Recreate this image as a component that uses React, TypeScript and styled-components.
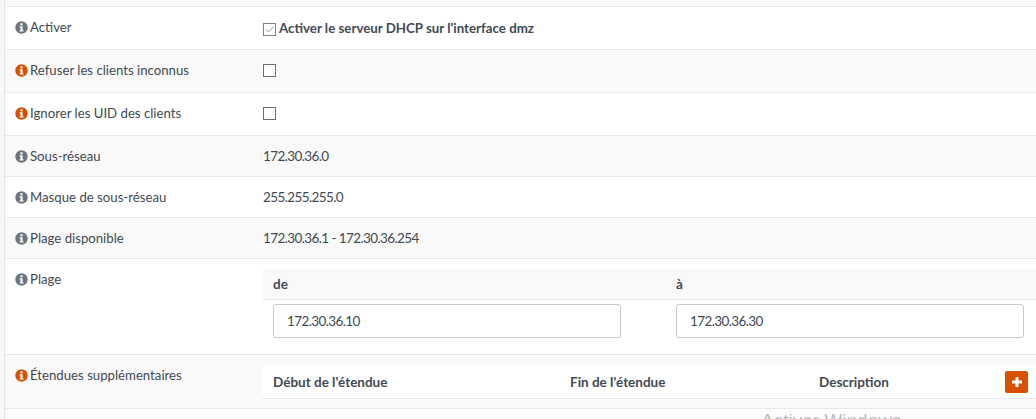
import React from "react";
import styled, { createGlobalStyle } from "styled-components";

const Global = createGlobalStyle`
  html, body { margin: 0; padding: 0; background: #f7f7f7; }
  body { font-family: "Lato", "Noto Sans", sans-serif; font-size: 14px; color: #424a52; }
  #root { width: 1036px; height: 419px; overflow: hidden; }
`;
const Page = styled.div`
  position: relative; height: 419px; padding: 0 0 0 4px; box-sizing: border-box; overflow: hidden;
`;
const Panel = styled.div`
  background: #fcfcfc; border-left: 1px solid #e5e5e5; height: 100%;
`;
const Row = styled.div<{ $h: number; $striped?: boolean }>`
  display: grid; grid-template-columns: 258px 1fr; box-sizing: border-box;
  height: ${p => p.$h}px; border-bottom: 1px solid #e8e8e8;
  background: ${p => (p.$striped ? "#f9f9f9" : "#fff")};
`;
const Label = styled.div<{ $top: number }>`
  display: flex; align-items: center; gap: 2px; height: 20px;
  margin: ${p => p.$top}px 0 0 10px; font-size: 13.2px; line-height: 20px;
`;
const Value = styled.div<{ $top: number }>`
  margin: ${p => p.$top}px 0 0 0; height: 20px; display: flex; align-items: center; font-size: 13.5px;
`;
const Numeric = styled.span`
  letter-spacing: -0.6px;
`;
const Box = styled.span`
  width: 11px; height: 11px; border: 1px solid #6f6f6f; background: #fff; display: block; flex: none;
  position: relative;
`;
const CheckedBox = styled(Box)`
  margin-top: 2px;
  border-color: #808080;
`;
const Bold = styled.span`
  font-weight: 700; margin-left: 3px; font-size: 13.3px;
`;
const InnerTable = styled.div`
  margin-top: 10px;
`;
const HeadRow = styled.div<{ $cols: string; $h: number; $bg: string }>`
  display: grid; grid-template-columns: ${p => p.$cols}; height: ${p => p.$h}px; box-sizing: border-box;
  background: ${p => p.$bg}; border-bottom: 1px solid #e8e8e8; padding: 0 8px 0 10px; align-items: center;
  font-weight: 700; font-size: 13.5px;
`;
const Inputs = styled.div`
  display: grid; grid-template-columns: 348px 348px; column-gap: 55px; padding: 4px 0 0 10px;
`;
const Input = styled.div`
  height: 34px; box-sizing: border-box; border: 1px solid #c8c8c8; border-radius: 3px; padding-left: 13px;
  line-height: 32px; background: #fff; font-size: 13.5px; letter-spacing: -0.6px;
`;
const Add = styled.span`
  width: 23px; height: 22px; border-radius: 2px; background: #d94f00; display: flex; align-items: center; justify-content: center;
`;
const AddCell = styled.div`
  display: flex; justify-content: flex-end;
`;
const Watermark = styled.div`
  position: absolute; left: 761px; top: 411px; font-size: 19px; line-height: 20px; color: #bdbdbd; white-space: nowrap;
  font-family: "Liberation Sans", sans-serif;
`;
const Info = ({ warn }: { warn?: boolean }) => (
  <svg width="13" height="13" viewBox="0 0 13 13" style={{ flex: "none" }}>
    <circle cx="6.5" cy="6.5" r="6.2" fill={warn ? "#d94f00" : "#6c757d"} />
    <rect x="5.4" y="2.3" width="2.2" height="2" fill="#fff" />
    <path d="M4.6 5.3h3v3.9h.9v1.2H4.6V9.2h.9V6.5h-.9z" fill="#fff" />
  </svg>
);
const L = ({ warn, top = 10, children }: { warn?: boolean; top?: number; children: React.ReactNode }) => (
  <Label $top={top}><Info warn={warn} />{children}</Label>
);
export default function App() {
  return (
    <Page>
      <Global />
      <Panel>
        <Row $h={7} $striped />
        <Row $h={43}>
          <L>Activer</L>
          <Value $top={11}>
            <CheckedBox><svg width="11" height="11" viewBox="0 0 11 11" style={{ display: "block" }}><path d="M2 5.5l2.5 2.5L9.5 2.5" fill="none" stroke="#7f9cba" strokeWidth="1" /></svg></CheckedBox>
            <Bold>Activer le serveur DHCP sur l'interface dmz</Bold>
          </Value>
        </Row>
        <Row $h={43} $striped><L warn>Refuser les clients inconnus</L><Value $top={10}><Box /></Value></Row>
        <Row $h={43}><L warn>Ignorer les UID des clients</L><Value $top={10}><Box /></Value></Row>
        <Row $h={41} $striped><L>Sous-réseau</L><Value $top={10}><Numeric>172.30.36.0</Numeric></Value></Row>
        <Row $h={41}><L>Masque de sous-réseau</L><Value $top={10}><Numeric>255.255.255.0</Numeric></Value></Row>
        <Row $h={41} $striped><L>Plage disponible</L><Value $top={10}><Numeric>172.30.36.1 - 172.30.36.254</Numeric></Value></Row>
        <Row $h={96}>
          <L>Plage</L>
          <InnerTable>
            <HeadRow $cols="403px 1fr" $h={31} $bg="#f9f9f9"><span>de</span><span>à</span></HeadRow>
            <Inputs><Input>172.30.36.10</Input><Input>172.30.36.30</Input></Inputs>
          </InnerTable>
        </Row>
        <Row $h={54} $striped>
          <L warn>Étendues supplémentaires</L>
          <InnerTable>
            <HeadRow $cols="297px 249px 185px 1fr" $h={34} $bg="#fff">
              <span>Début de l'étendue</span><span>Fin de l'étendue</span><span>Description</span>
              <AddCell><Add><svg width="12" height="12" viewBox="0 0 12 12"><path d="M4.5 1h3v3.5H11v3H7.5V11h-3V7.5H1v-3h3.5z" fill="#fff" /></svg></Add></AddCell>
            </HeadRow>
          </InnerTable>
        </Row>
      </Panel>
      <Watermark>Activer Windows</Watermark>
    </Page>
  );
}
